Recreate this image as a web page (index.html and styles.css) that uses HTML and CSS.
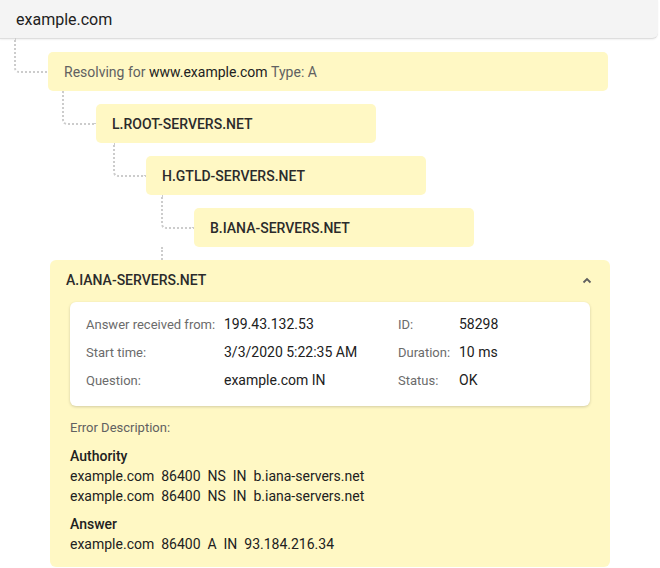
FILE: index.html
```html
<!DOCTYPE html>
<html lang="en">
<head>
    <meta charset="UTF-8">
    <title>DNS trace</title>
    <link rel="stylesheet" href="styles.css">
</head>
<body>
    <div class="domain-bar">example.com</div>

    <div class="trace">
        <div class="node node-query">
            <span class="muted">Resolving for</span>&nbsp;www.example.com&nbsp;<span class="muted">Type: A</span>
        </div>
        <div class="node node-server level-1">L.ROOT-SERVERS.NET</div>
        <div class="node node-server level-2">H.GTLD-SERVERS.NET</div>
        <div class="node node-server level-3">B.IANA-SERVERS.NET</div>

        <div class="node-open">
            <div class="open-head">
                <span>A.IANA-SERVERS.NET</span>
                <svg class="chevron" width="10" height="7" viewBox="0 0 10 7">
                    <path d="M1.5 5.5 L5 2 L8.5 5.5" fill="none" stroke="#5f5f5f" stroke-width="1.8"/>
                </svg>
            </div>

            <div class="details">
                <span class="label">Answer received from:</span>
                <span class="value">199.43.132.53</span>
                <span class="label">ID:</span>
                <span class="value">58298</span>

                <span class="label">Start time:</span>
                <span class="value">3/3/2020 5:22:35 AM</span>
                <span class="label">Duration:</span>
                <span class="value">10 ms</span>

                <span class="label">Question:</span>
                <span class="value">example.com IN</span>
                <span class="label">Status:</span>
                <span class="value">OK</span>
            </div>

            <div class="error-desc">Error Description:</div>

            <div class="section">
                <div class="section-title">Authority</div>
                <div class="record">example.com  86400  NS  IN  b.iana-servers.net</div>
                <div class="record">example.com  86400  NS  IN  b.iana-servers.net</div>
            </div>

            <div class="section">
                <div class="section-title">Answer</div>
                <div class="record">example.com  86400  A  IN  93.184.216.34</div>
            </div>
        </div>
    </div>
</body>
</html>
```

FILE: styles.css
```css
body {
    margin: 0;
    background: #fff;
    font-family: Roboto, "Liberation Sans", sans-serif;
    color: #212121;
}
.domain-bar {
    width: 642px;
    height: 38px;
    padding-left: 16px;
    display: flex;
    align-items: center;
    font-size: 16px;
    background: #f4f4f4;
    border-bottom: 1px solid #dedede;
    border-bottom-right-radius: 6px;
    box-shadow: 0 1px 2px rgba(0,0,0,0.06);
}
.trace {
    padding-top: 13px;
}
.node {
    position: relative;
    height: 39px;
    box-sizing: border-box;
    padding: 0 16px;
    display: flex;
    align-items: center;
    background: #fff8c4;
    border-radius: 5px;
    font-size: 14px;
    margin-bottom: 13px;
}
/* dotted elbow from the parent's line */
.node::before {
    content: "";
    position: absolute;
    top: -13px;
    left: -34px;
    width: 32px;
    height: 32px;
    border-left: 2px dotted #cccccc;
    border-bottom: 2px dotted #cccccc;
    border-bottom-left-radius: 5px;
}
.node-query {
    margin-left: 48px;
    width: 560px;
}
.node-query::before {
    top: -14px;
    height: 33px;
}
.muted {
    color: #616161;
}
.node-server {
    width: 280px;
    font-weight: 500;
    color: #2b2b2b;
}
.level-1 { margin-left: 96px; }
.level-2 { margin-left: 146px; }
.level-2::before { left: -33px; width: 31px; }
.level-3 { margin-left: 194px; }
.level-3::before { left: -33px; width: 31px; }

.node-open {
    position: relative;
    margin-left: 50px;
    width: 560px;
    box-sizing: border-box;
    padding: 0 20px 13px;
    background: #fff8c4;
    border-radius: 6px;
}
.node-open::before {
    content: "";
    position: absolute;
    top: -13px;
    left: 111px;
    height: 13px;
    border-left: 2px dotted #cccccc;
}
.open-head {
    height: 40px;
    margin-left: -4px;
    display: flex;
    align-items: center;
    justify-content: space-between;
    font-size: 14px;
    font-weight: 500;
    color: #2b2b2b;
}
.chevron {
    margin-right: -2px;
}
.details {
    margin-top: 2px;
    background: #fff;
    border-radius: 6px;
    box-shadow: 0 1px 3px rgba(0,0,0,0.18);
    padding: 8px 16px 12px;
    display: grid;
    grid-template-columns: 138px 174px 61px 1fr;
    grid-auto-rows: 28px;
    align-items: center;
    font-size: 13px;
}
.label {
    color: #6b6b6b;
}
.value {
    color: #212121;
    font-size: 14px;
}
.error-desc {
    margin-top: 14px;
    font-size: 13px;
    color: #616161;
    line-height: 16px;
}
.section {
    margin-top: 10px;
    font-size: 14px;
    line-height: 20px;
}
.section + .section {
    margin-top: 8px;
}
.section-title {
    font-weight: 500;
}
.record {
    white-space: pre;
}
```
